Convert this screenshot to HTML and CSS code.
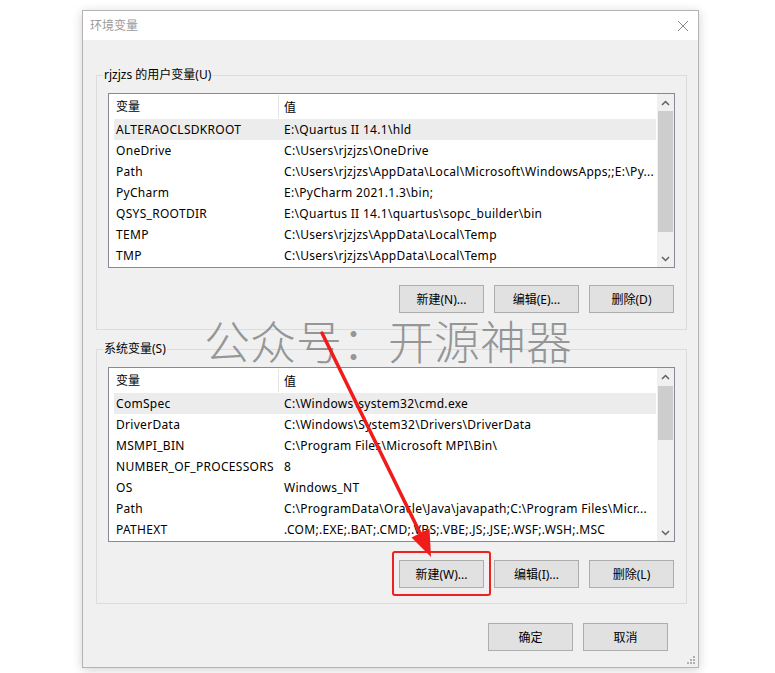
FILE: index.html
```html
<!DOCTYPE html>
<html lang="zh-CN">
<head>
    <meta charset="UTF-8">
    <meta name="viewport" content="width=device-width, initial-scale=1.0">
    <title>环境变量</title>
    <link rel="stylesheet" href="styles.css">
</head>
<body>
    <div class="stage">
        <div class="window">
            <div class="titlebar">
                <span class="title">环境变量</span>
                <svg class="close" width="12" height="12" viewBox="0 0 12 12">
                    <path d="M1 1 L11 11 M11 1 L1 11" stroke="#8a8a8a" stroke-width="1" fill="none"/>
                </svg>
            </div>

            <div class="content">
                <fieldset class="group">
                    <legend>rjzjzs 的用户变量(U)</legend>
                    <div class="list">
                        <div class="list-body">
                            <div class="list-head">
                                <span class="head-name">变量</span>
                                <span class="head-value">值</span>
                            </div>
                            <div class="row selected"><span class="cell-name">ALTERAOCLSDKROOT</span><span class="cell-value">E:\Quartus II 14.1\hld</span></div>
                            <div class="row"><span class="cell-name">OneDrive</span><span class="cell-value">C:\Users\rjzjzs\OneDrive</span></div>
                            <div class="row"><span class="cell-name">Path</span><span class="cell-value">C:\Users\rjzjzs\AppData\Local\Microsoft\WindowsApps;;E:\Py...</span></div>
                            <div class="row"><span class="cell-name">PyCharm</span><span class="cell-value">E:\PyCharm 2021.1.3\bin;</span></div>
                            <div class="row"><span class="cell-name">QSYS_ROOTDIR</span><span class="cell-value">E:\Quartus II 14.1\quartus\sopc_builder\bin</span></div>
                            <div class="row"><span class="cell-name">TEMP</span><span class="cell-value">C:\Users\rjzjzs\AppData\Local\Temp</span></div>
                            <div class="row"><span class="cell-name">TMP</span><span class="cell-value">C:\Users\rjzjzs\AppData\Local\Temp</span></div>
                        </div>
                        <div class="scrollbar">
                            <div class="scroll-btn">
                                <svg width="9" height="6" viewBox="0 0 9 6"><polyline points="1,5 4.5,1.5 8,5" stroke="#606060" stroke-width="1.5" fill="none"/></svg>
                            </div>
                            <div class="track"><div class="thumb" style="margin-top: 0; height: 121px;"></div></div>
                            <div class="scroll-btn">
                                <svg width="9" height="6" viewBox="0 0 9 6"><polyline points="1,1 4.5,4.5 8,1" stroke="#606060" stroke-width="1.5" fill="none"/></svg>
                            </div>
                        </div>
                    </div>
                    <div class="actions">
                        <button>新建(N)...</button>
                        <button>编辑(E)...</button>
                        <button>删除(D)</button>
                    </div>
                </fieldset>

                <fieldset class="group group-system">
                    <legend>系统变量(S)</legend>
                    <div class="list">
                        <div class="list-body">
                            <div class="list-head">
                                <span class="head-name">变量</span>
                                <span class="head-value">值</span>
                            </div>
                            <div class="row selected"><span class="cell-name">ComSpec</span><span class="cell-value">C:\Windows\system32\cmd.exe</span></div>
                            <div class="row"><span class="cell-name">DriverData</span><span class="cell-value">C:\Windows\System32\Drivers\DriverData</span></div>
                            <div class="row"><span class="cell-name">MSMPI_BIN</span><span class="cell-value">C:\Program Files\Microsoft MPI\Bin\</span></div>
                            <div class="row"><span class="cell-name">NUMBER_OF_PROCESSORS</span><span class="cell-value">8</span></div>
                            <div class="row"><span class="cell-name">OS</span><span class="cell-value">Windows_NT</span></div>
                            <div class="row"><span class="cell-name">Path</span><span class="cell-value">C:\ProgramData\Oracle\Java\javapath;C:\Program Files\Micr...</span></div>
                            <div class="row"><span class="cell-name">PATHEXT</span><span class="cell-value">.COM;.EXE;.BAT;.CMD;.VBS;.VBE;.JS;.JSE;.WSF;.WSH;.MSC</span></div>
                        </div>
                        <div class="scrollbar">
                            <div class="scroll-btn">
                                <svg width="9" height="6" viewBox="0 0 9 6"><polyline points="1,5 4.5,1.5 8,5" stroke="#606060" stroke-width="1.5" fill="none"/></svg>
                            </div>
                            <div class="track"><div class="thumb" style="margin-top: 1px; height: 54px;"></div></div>
                            <div class="scroll-btn">
                                <svg width="9" height="6" viewBox="0 0 9 6"><polyline points="1,1 4.5,4.5 8,1" stroke="#606060" stroke-width="1.5" fill="none"/></svg>
                            </div>
                        </div>
                    </div>
                    <div class="actions">
                        <button class="marked">新建(W)...</button>
                        <button>编辑(I)...</button>
                        <button>删除(L)</button>
                    </div>
                </fieldset>

                <div class="footer">
                    <button>确定</button>
                    <button>取消</button>
                </div>
            </div>

            <svg class="grip" width="10" height="10" viewBox="0 0 10 10">
                <rect x="7" y="1" width="2" height="2" fill="#b0b0b0"/>
                <rect x="4" y="4" width="2" height="2" fill="#b0b0b0"/>
                <rect x="7" y="4" width="2" height="2" fill="#b0b0b0"/>
                <rect x="1" y="7" width="2" height="2" fill="#b0b0b0"/>
                <rect x="4" y="7" width="2" height="2" fill="#b0b0b0"/>
                <rect x="7" y="7" width="2" height="2" fill="#b0b0b0"/>
            </svg>
        </div>

        <div class="watermark">公众号：开源神器</div>

        <svg class="pointer" width="775" height="673" viewBox="0 0 775 673">
            <line x1="322" y1="333" x2="421" y2="535" stroke="#f01c1c" stroke-width="3.5" stroke-linecap="round"/>
            <polygon points="431,557 429.5,528.5 411.5,537.5" fill="#f01c1c"/>
        </svg>
    </div>
</body>
</html>
```

FILE: styles.css
```css
body {
    margin: 0;
    background-color: #fff;
    font-family: "Noto Sans", "Noto Sans CJK SC", sans-serif;
    font-size: 12px;
    color: #000;
}

.stage {
    position: relative;
    width: 775px;
    height: 673px;
    overflow: hidden;
}

.window {
    position: relative;
    width: 615px;
    margin: 10px 0 0 82px;
    border: 1px solid #b4b4b4;
    background-color: #f0f0f0;
    box-shadow: 0 2px 10px rgba(0, 0, 0, 0.18);
}

.titlebar {
    height: 29px;
    background-color: #fff;
    display: flex;
    align-items: center;
    justify-content: space-between;
    padding: 0 9px 0 7px;
}

.title {
    color: #9a9a9a;
    line-height: 16px;
}

.content {
    padding: 27px 11px 16px 13px;
}

.group {
    margin: 0;
    padding: 10px 11px 16px;
    border: 1px solid #dcdcdc;
    min-inline-size: 0;
}

.group legend {
    padding: 0 1px;
    margin-left: -5px;
    line-height: 16px;
}

.group-system {
    margin-top: 11px;
    padding-bottom: 15px;
}

.list {
    display: flex;
    height: 173px;
    border: 1px solid #868a92;
    background-color: #fff;
}

.list-body {
    flex: 1;
    min-width: 0;
}

.list-head {
    display: flex;
    height: 25px;
    align-items: center;
}

.head-name {
    width: 162px;
    padding-left: 7px;
    line-height: 23px;
    border-right: 1px solid #e5e5e5;
}

.head-value {
    padding-left: 5px;
}

.row {
    display: flex;
    height: 21px;
    align-items: center;
    margin: 0 1px 0 5px;
    white-space: nowrap;
    letter-spacing: 0.3px;
}

.row.selected {
    background-color: #ececec;
}

.cell-name {
    width: 166px;
    padding-left: 2px;
    overflow: hidden;
}

.cell-value {
    flex: 1;
    padding-left: 2px;
    overflow: hidden;
}

.scrollbar {
    width: 17px;
    display: flex;
    flex-direction: column;
    background-color: #f0f0f0;
}

.scroll-btn {
    height: 17px;
    display: flex;
    align-items: center;
    justify-content: center;
}

.track {
    flex: 1;
    padding: 0 1px;
}

.thumb {
    background-color: #cdcdcd;
}

.actions {
    display: flex;
    justify-content: flex-end;
    gap: 10px;
    margin: 17px 1px 0 0;
}

.group-system .actions {
    margin-top: 18px;
}

button {
    width: 85px;
    height: 28px;
    padding: 0;
    font: inherit;
    color: #000;
    background-color: #e1e1e1;
    border: 1px solid #adadad;
    border-radius: 0;
}

.marked {
    position: relative;
}

.marked::after {
    content: "";
    position: absolute;
    left: -8px;
    right: -8px;
    top: -10px;
    bottom: -9px;
    border: 2px solid #f0201e;
    border-radius: 3px;
}

.footer {
    display: flex;
    justify-content: flex-end;
    gap: 10px;
    margin-top: 19px;
    padding-right: 19px;
}

.grip {
    position: absolute;
    right: 2px;
    bottom: 2px;
}

.watermark {
    position: absolute;
    left: 204px;
    top: 316px;
    font-family: "Noto Sans CJK SC", sans-serif;
    font-weight: 300;
    font-size: 46px;
    line-height: 46px;
    color: rgba(120, 120, 120, 0.75);
    white-space: nowrap;
}

.pointer {
    position: absolute;
    left: 0;
    top: 0;
}
```
